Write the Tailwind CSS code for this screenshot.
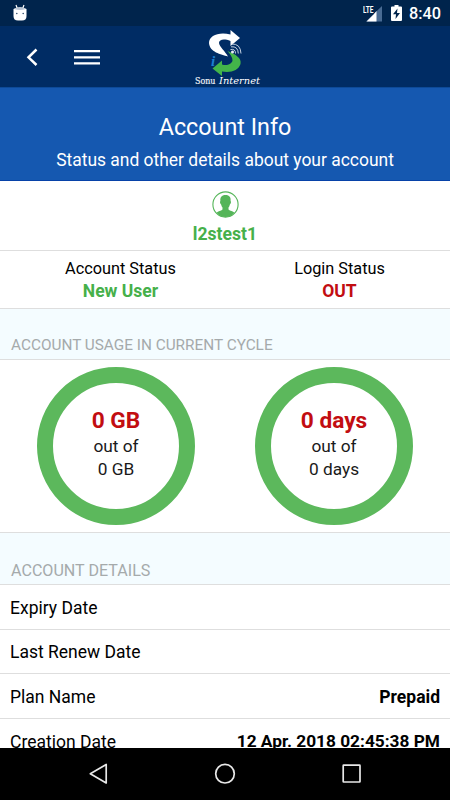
<!DOCTYPE html>
<html lang="en">
<head>
<meta charset="utf-8">
<title>Account Info</title>
<script src="https://cdn.jsdelivr.net/npm/@tailwindcss/browser@4"></script>
</head>
<body class="w-[450px] h-[800px] overflow-hidden bg-white text-black font-['Roboto',sans-serif]">
<div class="flex flex-col h-[800px]">
  <!-- status bar -->
  <div class="h-[26px] shrink-0 bg-[#00244c] flex items-center justify-between pl-[13px] pr-[9px]">
    <svg class="w-[14px] h-[17px] -mt-[2px]" viewBox="0 0 14 17"><path d="M3 1l1.500 4M11 1L9.500 5" stroke="#fff" stroke-width="1.200"/><path d="M.5 5Q7 1.500 13.500 5V12Q13.500 16.500 9 16.500H5Q.5 16.500 .5 12Z" fill="#fff"/><path d="M1 5Q7 7 13 5Q7 1.500 1 5Z" fill="#b8c4d4"/><circle cx="3.800" cy="9.500" r=".8" fill="#34506f"/><circle cx="10.200" cy="9.500" r=".8" fill="#34506f"/></svg>
    <div class="flex items-center text-white">
      <svg class="w-[20px] h-[18px] mr-[8px]" viewBox="0 0 20 18"><path d="M19 2V17.500H3Z" fill="#496b93"/><path d="M0 0H11V10.500H0Z" fill="#00244c"/><path d="M13.500 7V17.500H3.500L11 10Z" fill="#fff"/><text x="0" y="8.500" font-size="9" font-weight="700" fill="#fff" textLength="10.500" lengthAdjust="spacingAndGlyphs">LTE</text></svg>
      <svg class="w-[11px] h-[16px] mr-[7px]" viewBox="0 0 11 16"><path d="M3.500 0h4v1.500H10q1 0 1 1V15q0 1-1 1H1q-1 0-1-1V2.500q0-1 1-1H3.500Z" fill="#fff"/><path d="M6.500 3.500L2 9.300h3L4.500 14 9 8H6Z" fill="#00244c"/></svg>
      <span class="text-[16.3px] leading-[24px] pt-[2px] font-medium">8:40</span>
    </div>
  </div>
  <!-- toolbar -->
  <div class="h-[61px] shrink-0 bg-[#002c64] relative flex items-start pt-[22px] pl-[26px]">
    <svg class="w-[12px] h-[18px]" viewBox="0 0 12 18" fill="none" stroke="#fff" stroke-width="2.500"><path d="M10.500 1.500L2.500 9.300L10.500 17"/></svg>
    <svg class="w-[26px] h-[18px] ml-[36px]" viewBox="0 0 26 18" fill="#fff"><path d="M0 2h26v2.200H0zM0 8.200h26v2.200H0zM0 14.300h26v2.200H0z"/></svg>
    <svg class="absolute left-[180px] top-0 w-[90px] h-[61px]" viewBox="0 6 90 61">
      <path d="M50.500 10L60 18L50.500 26V21C44 18.500 39 19.500 39 23C39.500 27 45 31 48 36.500C41 34.500 29.500 32 29 23C29 15.500 39 11.500 50.500 14.500Z" fill="#fff"/>
      <path d="M32.500 48.500L42 40.500V44.500C47 46 52 44 52.500 40.500C52.700 37.500 50 34 47.500 31C55 34 62 38 60.500 44C58.500 50.500 51 53 42 51.500V56Z" fill="#43b54a"/>
      <g fill="none" stroke="#c3d0e0" stroke-width="1"><path d="M50.500 29.500Q55.500 28.500 55.500 33.500M51 26.800Q58 26 58.300 33.500M51.500 24Q60.500 23.500 61 33.500"/></g><circle cx="52.500" cy="32" r="1.500" fill="#e9eef5"/>
      <text x="31" y="46" font-family="Liberation Serif,serif" font-style="italic" font-weight="700" font-size="15" fill="#1c7fd0">i</text>
      <text x="15" y="64" font-family="DejaVu Serif,serif" font-size="9" fill="#f1f3f7" stroke="#f1f3f7" stroke-width=".2" textLength="20.500" lengthAdjust="spacingAndGlyphs">Sonu</text>
      <text x="39" y="64" font-family="DejaVu Serif,serif" font-style="italic" font-size="9.500" fill="#fff" textLength="41" lengthAdjust="spacingAndGlyphs">Internet</text>
    </svg>
  </div>
  <!-- heading -->
  <div class="h-[94px] shrink-0 bg-[#1558b0] border-t border-b border-t-[#0d4a98] border-b-[#0742a8] text-white text-center pt-[23px]">
    <h1 class="text-[23.3px] leading-[32px]">Account Info</h1>
    <p class="text-[17.450px] leading-[24px] mt-[5px]">Status and other details about your account</p>
  </div>
  <div class="h-[70px] shrink-0 border-b border-[#dedede] flex flex-col items-center pt-[10px]">
    <svg class="w-[27px] h-[27px]" viewBox="0 0 27 27"><circle cx="13.500" cy="13.500" r="12.600" fill="#fff" stroke="#55b559" stroke-width="1.100"/><path d="M13.500 4C17.500 4 19 6.500 18.600 10C19.500 10.500 18.800 13 17.900 13.500C17.500 15 17 16 16.500 16.500V18.500C18 20 21 20 22.500 21.800Q19 26 13.500 26T4.500 21.800C6 20 9 20 10.500 18.500V16.500C10 16 9.500 15 9.100 13.500C8.200 13 7.500 10.500 8.400 10C8 6.500 9.500 4 13.500 4Z" fill="#55b559"/></svg>
    <span class="text-[17.6px] leading-[24px] mt-[4px] font-bold text-[#46b04a]">l2stest1</span>
  </div>
  <div class="h-[58px] shrink-0 border-b border-[#dedede] flex text-center pt-[6px] text-[16.3px] leading-[23px] pl-[7px]">
    <div class="w-[227px]"><div>Account Status</div><div class="font-bold text-[#46b04a] text-[17.5px]">New User</div></div>
    <div class="w-[211px]"><div>Login Status</div><div class="font-bold text-[#c20d11] text-[17.5px]">OUT</div></div>
  </div>
  <div class="h-[51px] shrink-0 bg-[#f4fcff] border-b border-[#dedede] pt-[26px] pl-[11px] text-[15.350px] leading-[20px] text-[#a5aaab]">ACCOUNT USAGE IN CURRENT CYCLE</div>
  <!-- usage rings -->
  <div class="h-[173px] shrink-0 border-b border-[#dedede] flex gap-[60px] pl-[37px] pt-[7px]">
    <div class="w-[158px] h-[158px] rounded-full border-[16px] border-[#5cb85c] text-center text-[17.3px] leading-[23px] text-[#1a1a1a] pt-[24px]">
      <div class="text-[22.7px] leading-[28px] font-bold text-[#c20d11]">0 GB</div><div>out of</div><div>0 GB</div>
    </div>
    <div class="w-[158px] h-[158px] rounded-full border-[16px] border-[#5cb85c] text-center text-[17.3px] leading-[23px] text-[#1a1a1a] pt-[24px]">
      <div class="text-[22.7px] leading-[28px] font-bold text-[#c20d11]">0 days</div><div>out of</div><div>0 days</div>
    </div>
  </div>
  <div class="h-[52px] shrink-0 bg-[#f4fcff] border-b border-[#dedede] pt-[28px] pl-[11px] text-[16.1px] leading-[20px] text-[#a5aaab]">ACCOUNT DETAILS</div>
  <!-- detail rows -->
  <div class="h-[163px] shrink-0 overflow-hidden text-[17.5px]">
    <div class="h-[44.5px] border-b border-[#dedede] flex items-center justify-between px-[10px] pt-[2px]"><span>Expiry Date</span></div>
    <div class="h-[44.5px] border-b border-[#dedede] flex items-center justify-between px-[10px] pt-[2px]"><span>Last Renew Date</span></div>
    <div class="h-[44.5px] border-b border-[#dedede] flex items-center justify-between px-[10px] pt-[2px]"><span>Plan Name</span><b>Prepaid</b></div>
    <div class="h-[44.5px] flex items-center justify-between px-[10px] pt-[2px]"><span>Creation Date</span><b class="text-[17.3px]">12 Apr. 2018 02:45:38 PM</b></div>
  </div>
  <!-- system navigation -->
  <div class="h-[52px] shrink-0 bg-black">
    <svg class="w-[450px] h-[52px]" viewBox="0 0 450 52" fill="none" stroke="#e8e8e8" stroke-width="1.700" stroke-linejoin="round"><path d="M106.200 16.500V35L90.300 25.800Z"/><circle cx="225" cy="25.700" r="9.300"/><rect x="343.200" y="17.200" width="16.800" height="16.800" rx=".5"/></svg>
  </div>
</div>
</body>
</html>
